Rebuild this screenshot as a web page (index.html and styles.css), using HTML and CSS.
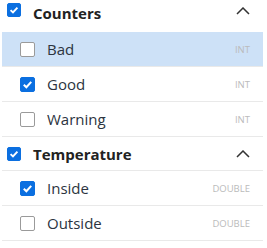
FILE: index.html
```html
<!DOCTYPE html>
<html>
<head>
<meta charset="utf-8">
<link rel="stylesheet" href="styles.css">
</head>
<body>
<div class="list">
  <div class="group first">
    <div class="ghead">
      <span class="cb on"><svg viewBox="0 0 14 14"><path d="M3 7.2 L5.8 9.9 L11 4.2"/></svg></span>
      <span class="gname">Counters</span>
      <svg class="chev" viewBox="0 0 14 8"><path d="M1 7 L7 1 L13 7"/></svg>
    </div>
    <div class="row sel">
      <span class="cb"></span>
      <span class="name">Bad</span>
      <span class="type">INT</span>
    </div>
    <div class="row">
      <span class="cb on"><svg viewBox="0 0 14 14"><path d="M3 7.2 L5.8 9.9 L11 4.2"/></svg></span>
      <span class="name">Good</span>
      <span class="type">INT</span>
    </div>
    <div class="row">
      <span class="cb"></span>
      <span class="name">Warning</span>
      <span class="type">INT</span>
    </div>
  </div>
  <div class="group">
    <div class="ghead">
      <span class="cb on"><svg viewBox="0 0 14 14"><path d="M3 7.2 L5.8 9.9 L11 4.2"/></svg></span>
      <span class="gname">Temperature</span>
      <svg class="chev" viewBox="0 0 14 8"><path d="M1 7 L7 1 L13 7"/></svg>
    </div>
    <div class="row">
      <span class="cb on"><svg viewBox="0 0 14 14"><path d="M3 7.2 L5.8 9.9 L11 4.2"/></svg></span>
      <span class="name">Inside</span>
      <span class="type">DOUBLE</span>
    </div>
    <div class="row">
      <span class="cb"></span>
      <span class="name">Outside</span>
      <span class="type">DOUBLE</span>
    </div>
  </div>
</div>
</body>
</html>
```
FILE: styles.css
```css
html, body {
  margin: 0;
  padding: 0;
  background: #fff;
}
body {
  font-family: "Open Sans", "Noto Sans", sans-serif;
  color: #333;
  overflow: hidden;
}
.list {
  margin: 0 4px 0 2px;
}
.ghead {
  display: flex;
  align-items: center;
  height: 33px;
  padding: 0 13px 0 5px;
  border-bottom: 1px solid #e9e9e9;
}
.group.first .ghead {
  align-items: flex-start;
  padding-top: 3px;
  box-sizing: border-box;
  height: 32px;
  border-bottom: none;
}
.gname {
  margin-left: 12px;
  font-weight: 700;
  font-size: 15px;
  color: #222;
  flex: 1;
}
.chev {
  width: 14px;
  height: 8px;
  fill: none;
  stroke: #333;
  stroke-width: 1.5;
}
.group.first .chev {
  margin-top: 4px;
}
.row {
  display: flex;
  align-items: center;
  height: 34px;
  padding: 0 13px 0 18px;
  border-bottom: 1px solid #e9e9e9;
}
.row.sel {
  background: #cde1f7;
}
.name {
  margin-left: 12px;
  font-size: 15px;
  color: #2c3440;
  flex: 1;
}
.type {
  font-size: 9.5px;
  color: #bbb;
}
.cb {
  width: 14px;
  height: 14px;
  box-sizing: border-box;
  border: 1px solid #9a9a9a;
  border-radius: 2px;
  background: #fff;
  display: inline-flex;
  flex: none;
}
.row .cb {
  width: 15px;
  height: 15px;
}
.cb.on {
  background: #0b6fe0;
  border-color: #0b6fe0;
}
.cb svg {
  width: 100%;
  height: 100%;
  fill: none;
  stroke: #fff;
  stroke-width: 2.2;
}
```
